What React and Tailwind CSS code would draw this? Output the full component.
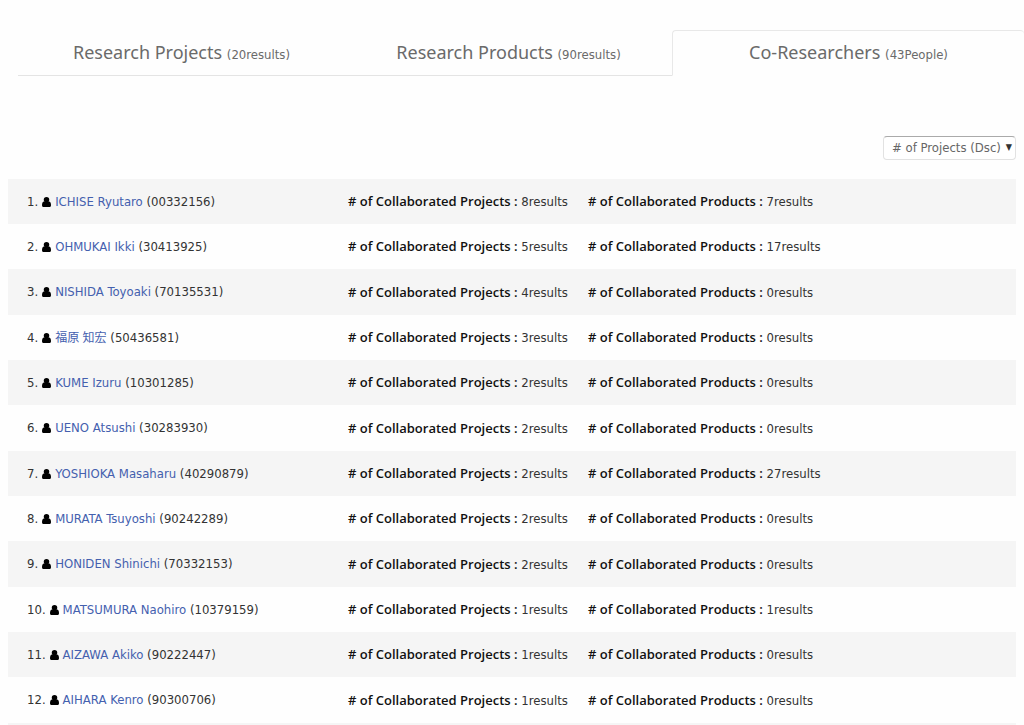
const tabs = [
  { label: 'Research Projects', count: '(20results)' },
  { label: 'Research Products', count: '(90results)' },
  { label: 'Co-Researchers', count: '(43People)', active: true },
];

const people = [
  { name: 'ICHISE Ryutaro', id: '00332156', projects: 8, products: 7 },
  { name: 'OHMUKAI Ikki', id: '30413925', projects: 5, products: 17 },
  { name: 'NISHIDA Toyoaki', id: '70135531', projects: 4, products: 0 },
  { name: '福原 知宏', id: '50436581', projects: 3, products: 0, lang: 'ja' },
  { name: 'KUME Izuru', id: '10301285', projects: 2, products: 0 },
  { name: 'UENO Atsushi', id: '30283930', projects: 2, products: 0 },
  { name: 'YOSHIOKA Masaharu', id: '40290879', projects: 2, products: 27 },
  { name: 'MURATA Tsuyoshi', id: '90242289', projects: 2, products: 0 },
  { name: 'HONIDEN Shinichi', id: '70332153', projects: 2, products: 0 },
  { name: 'MATSUMURA Naohiro', id: '10379159', projects: 1, products: 1 },
  { name: 'AIZAWA Akiko', id: '90222447', projects: 1, products: 0 },
  { name: 'AIHARA Kenro', id: '90300706', projects: 1, products: 0 },
];

function UserIcon() {
  return (
    <svg viewBox="0 0 18 20" className="h-[10px] w-[9px] shrink-0" fill="#000" aria-hidden="true">
      <circle cx="9" cy="5.5" r="5.5" />
      <path d="M4 9C1.5 9.5 0 12 0 16C0 18.800 1.200 20 3 20H15C16.800 20 18 18.800 18 16C18 12 16.500 9.500 14 9Z" />
    </svg>
  );
}

function Tab({ label, count, active }) {
  return (
    <button
      type="button"
      role="tab"
      aria-selected={!!active}
      className={
        active
          ? "rounded-t border border-r-0 border-[#e8e8e8] border-b-transparent font-['Noto_Sans',sans-serif] text-[18px] leading-6"
          : "border-t border-b border-t-transparent border-b-[#e4e4e4] font-['Noto_Sans',sans-serif] text-[18px] leading-6"
      }
    >
      {label} <span className="font-['DejaVu_Sans_Condensed',sans-serif] text-[13px]">{count}</span>
    </button>
  );
}

function Stat({ label, value }) {
  return (
    <p>
      <span className="font-['Open_Sans',sans-serif] font-semibold text-[#111]">{label} :</span> {value}results
    </p>
  );
}

export default function App() {
  return (
    <main className="bg-[#fefefe] pt-[30px] font-['DejaVu_Sans_Condensed','Noto_Sans_CJK_JP',sans-serif] text-[#333]">
      <div role="tablist" className="grid h-[46px] grid-cols-[327fr_327fr_352fr] pl-[18px] text-[#6a6a6a]">
        {tabs.map((tab) => (
          <Tab key={tab.label} {...tab} />
        ))}
      </div>

      <div className="flex justify-end pt-[60px] pr-2">
        <div className="relative flex">
          <select
            aria-label="Sort order"
            className="h-6 w-[133px] appearance-none rounded border border-[#e2e2e2] border-t-[#aaa] bg-white pl-2 text-[13px] text-[#666]"
          >
            <option># of Projects (Dsc)</option>
          </select>
          <span className="pointer-events-none absolute inset-y-0 right-1 flex items-center text-[9px] text-[#333]">▼</span>
        </div>
      </div>

      <ol className="mx-2 mt-[19px] border-b-2 border-[#f5f5f5] text-[13px] leading-5">
        {people.map((person, index) => (
          <li
            key={person.id}
            className="grid h-[45px] grid-cols-[321px_240px_1fr] items-center pl-[19px] odd:bg-[#f5f5f5] nth-[3n]:h-[46px]"
          >
            <div className="flex items-center gap-1">
              <span>{index + 1}.</span>
              <UserIcon />
              <span>
                <a href="#" lang={person.lang} className="text-[#4460ae] [&:lang(ja)]:text-[12px]">{person.name}</a> ({person.id})
              </span>
            </div>
            <Stat label="# of Collaborated Projects" value={person.projects} />
            <Stat label="# of Collaborated Products" value={person.products} />
          </li>
        ))}
      </ol>
    </main>
  );
}
